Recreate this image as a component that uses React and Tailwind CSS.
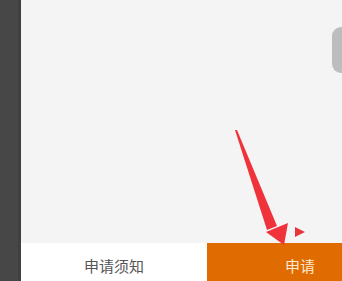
import React from 'react';

const Arrow = () => (
  <svg className="absolute left-0 top-0" width="342" height="281" viewBox="0 0 342 281">
    {/* shaft */}
    <polygon points="235,130 237,130 277,226 267,230" fill="#f0323a" />
    {/* head */}
    <polygon points="266,232 288,223 284,245" fill="#f0323a" />
    {/* little pointer */}
    <polygon points="295,227 295,237 305,232" fill="#e8343c" />
  </svg>
);

export default function App() {
  return (
    <div className="relative w-[342px] h-[281px] overflow-hidden flex bg-[#f4f4f4]" style={{ fontFamily: '"Noto Sans CJK SC", "Noto Sans", sans-serif' }}>
      {/* left dark strip */}
      <div className="w-[21px] h-full bg-[#474747] border-r-[3px] border-[#404040]"></div>

      <div className="flex-1 flex flex-col">
        <div className="flex-1 relative">
          <div className="absolute left-[311px] top-[27px] w-[30px] h-[46px] rounded-[9px] bg-[#bdbdbd]"></div>
        </div>
        <div className="h-[38px] flex">
          <div className="w-[186px] bg-white flex items-center justify-center pt-[8px] text-[15px] text-[#555555]">
            申请须知
          </div>
          <div className="flex-1 bg-[#e06b00] flex items-center pl-[78px] pt-[8px] text-[15px] text-[#fde9cf]">
            申请
          </div>
        </div>
      </div>

      <Arrow />
    </div>
  );
}
